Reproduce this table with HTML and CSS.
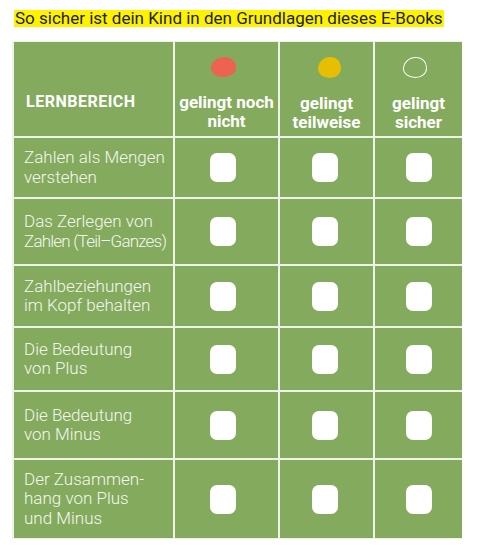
FILE: index.html
```html
<!DOCTYPE html>
<html lang="de">
<head>
<meta charset="utf-8">
<link rel="stylesheet" href="styles.css">
</head>
<body>
<div class="title"><span class="mark">So sicher ist dein Kind in den Grundlagen dieses E-Books</span></div>
<div class="grid">
  <div class="cell head first"><span class="lb">LERNBEREICH</span></div>
  <div class="cell head"><span class="dot red"></span><span class="ht">gelingt noch<br>nicht</span></div>
  <div class="cell head"><span class="dot yellow"></span><span class="ht">gelingt<br>teilweise</span></div>
  <div class="cell head"><span class="dot ring"></span><span class="ht">gelingt<br>sicher</span></div>

  <div class="cell label"><p class="lt">Zahlen als Mengen<br>verstehen</p></div>
  <div class="cell box c1"><span class="chk"></span></div>
  <div class="cell box c2"><span class="chk"></span></div>
  <div class="cell box c3"><span class="chk"></span></div>

  <div class="cell label"><p class="lt">Das Zerlegen von<br><span class="tight">Zahlen (Teil–Ganzes)</span></p></div>
  <div class="cell box c1"><span class="chk"></span></div>
  <div class="cell box c2"><span class="chk"></span></div>
  <div class="cell box c3"><span class="chk"></span></div>

  <div class="cell label"><p class="lt">Zahlbeziehungen<br>im Kopf behalten</p></div>
  <div class="cell box c1"><span class="chk"></span></div>
  <div class="cell box c2"><span class="chk"></span></div>
  <div class="cell box c3"><span class="chk"></span></div>

  <div class="cell label"><p class="lt">Die Bedeutung<br>von Plus</p></div>
  <div class="cell box c1"><span class="chk"></span></div>
  <div class="cell box c2"><span class="chk"></span></div>
  <div class="cell box c3"><span class="chk"></span></div>

  <div class="cell label"><p class="lt">Die Bedeutung<br>von Minus</p></div>
  <div class="cell box c1"><span class="chk"></span></div>
  <div class="cell box c2"><span class="chk"></span></div>
  <div class="cell box c3"><span class="chk"></span></div>

  <div class="cell label"><p class="lt">Der Zusammen-<br>hang von Plus<br>und Minus</p></div>
  <div class="cell box c1"><span class="chk"></span></div>
  <div class="cell box c2"><span class="chk"></span></div>
  <div class="cell box c3"><span class="chk"></span></div>
</div>
</body>
</html>
```
FILE: styles.css
```css
html, body {
  margin: 0;
  padding: 0;
  background: #ffffff;
}
body {
  font-family: Roboto, "Liberation Sans", sans-serif;
}
.title {
  padding: 9px 0 0 14px;
  height: 41px;
  box-sizing: border-box;
}
.mark {
  display: inline-block;
  background: #fff200;
  color: #1c1f24;
  font-size: 17px;
  line-height: 17px;
  height: 17px;
  padding: 0 1px;
}
.grid {
  margin-left: 12px;
  width: 450px;
  display: grid;
  grid-template-columns: 159px 103px 93px 87px;
  grid-template-rows: 94px 59px 65px 60px 62px 66px 78px;
  gap: 2px;
  padding: 1px 2px;
  background: #eef3e9;
  box-sizing: border-box;
}
.cell {
  background: #83aa5d;
  color: #ffffff;
}
.head {
  display: flex;
  flex-direction: column;
  align-items: center;
  padding-top: 15px;
  box-sizing: border-box;
}
.head.first {
  align-items: flex-start;
  padding: 50px 0 0 12px;
}
.lb {
  font-weight: 700;
  font-size: 16px;
  letter-spacing: 0.5px;
  line-height: 20px;
}
.ht {
  font-weight: 700;
  font-size: 17px;
  line-height: 19px;
  text-align: center;
  margin-top: 16px;
  white-space: nowrap;
}
.dot {
  display: block;
  width: 25px;
  height: 20px;
  box-sizing: border-box;
  border-radius: 55% 45% 50% 52% / 58% 52% 48% 45%;
}
.red { background: #ec6350; margin-right: 7px; }
.yellow { background: #e7bf02; width: 23px; height: 21px; margin-left: 5px; }
.ring { border: 1.5px solid #ffffff; width: 24px; height: 21px; margin-right: 8px; }
.label {
  display: flex;
  align-items: center;
  padding-left: 10px;
}
.lt {
  margin: 0;
  font-weight: 300;
  font-size: 17px;
  line-height: 19.5px;
  color: #f4f7f0;
  white-space: nowrap;
}
.tight {
  letter-spacing: -0.8px;
}
.box {
  display: flex;
  align-items: center;
  justify-content: center;
}
.c1 { padding-right: 7px; }
.c2 { padding-right: 3px; }
.chk {
  display: block;
  width: 26px;
  height: 29px;
  background: #ffffff;
  border-radius: 7px;
}
```
